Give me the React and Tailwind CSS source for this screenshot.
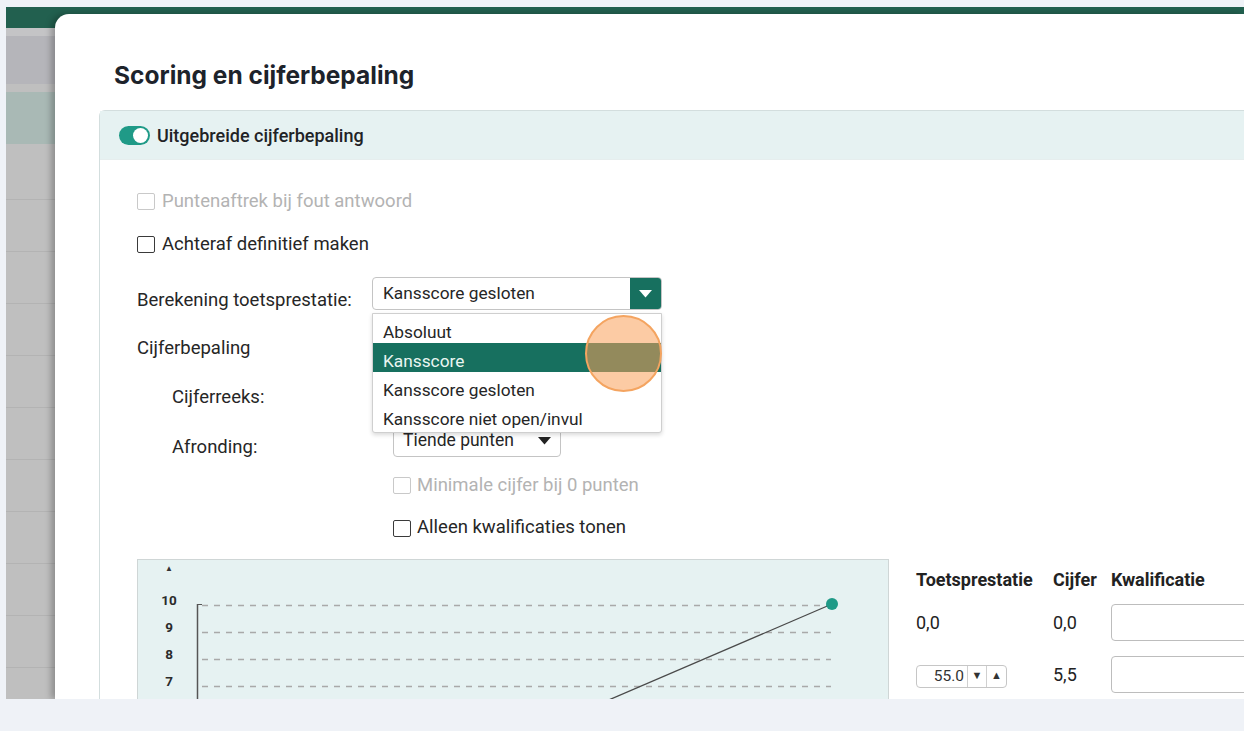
import React from "react";

const bgRows = [
  { h: 8, c: "bg-[#c4c4c6]" },
  { h: 48, c: "bg-[#b5b5ba]" },
  { h: 8, c: "bg-[#bfbfbf]" },
  { h: 52, c: "bg-[#a9b9b5]" },
  { h: 55, c: "bg-[#bfbfbf]" },
  ...Array.from({ length: 10 }, () => ({ h: 52, c: "bg-[#bfbfbf] border-t border-[#b3b3b3]" })),
];

function Checkbox({ disabled }) {
  return (
    <span
      className={`inline-block shrink-0 w-[18px] h-[17px] rounded-[2px] border bg-white ${
        disabled ? "border-[#c9c9c9]" : "border-[#3a3a3a]"
      }`}
    />
  );
}

function Toggle() {
  return (
    <span className="relative inline-flex items-center w-[31px] h-[19px] rounded-full bg-[#1f9a87]">
      <span className="absolute right-[2px] w-[15px] h-[15px] rounded-full bg-white" />
    </span>
  );
}

function Caret({ className = "" }) {
  return (
    <svg width="13" height="8" viewBox="0 0 13 8" className={className}>
      <path d="M0 0 L13 0 L6.5 7.5 Z" fill="currentColor" />
    </svg>
  );
}

function ScoreChart() {
  const gridY = [45, 72, 99, 126];
  return (
    <svg width="752" height="150" className="block">
      <text x="31" y="11" fontSize="8" fontWeight="700" fill="#333" textAnchor="middle">▲</text>
      {["10", "9", "8", "7"].map((t, i) => (
        <text
          key={t}
          x="31"
          y={45 + i * 27}
          fontSize="13.5"
          fontWeight="700"
          fill="#2b2b2b"
          textAnchor="middle"
          fontFamily="Roboto, sans-serif"
        >
          {t}
        </text>
      ))}
      <line x1="59.5" y1="44" x2="59.5" y2="150" stroke="#555" strokeWidth="1.5" />
      <line x1="59" y1="44.5" x2="64" y2="44.5" stroke="#555" strokeWidth="1" />
      {gridY.map((y) => (
        <line key={y} x1="64" y1={y + 0.5} x2="693" y2={y + 0.5} stroke="#a9a9a9" strokeWidth="1.5" strokeDasharray="6 6" />
      ))}
      <line x1="694" y1="44" x2="466" y2="142" stroke="#4a4a4a" strokeWidth="1.3" />
      <circle cx="694" cy="44" r="6" fill="#1f9a87" />
    </svg>
  );
}

function GradeTable() {
  return (
    <div className="pt-[10px] text-[18px] text-[#222]">
      <div className="flex h-[20px] items-center font-bold">
        <span className="w-[137px]">Toetsprestatie</span>
        <span className="w-[58px]">Cijfer</span>
        <span className="whitespace-nowrap">Kwalificatie</span>
      </div>
      <div className="flex items-center h-[37px] mt-[15px]">
        <span className="w-[137px]">0,0</span>
        <span className="w-[58px]">0,0</span>
        <span className="w-[140px] h-[37px] rounded-[4px] border border-[#bdbdbd] bg-white" />
      </div>
      <div className="flex items-center h-[37px] mt-[15px]">
        <span className="w-[137px]">
          <span className="inline-flex h-[23px] items-stretch rounded-[4px] border border-[#c6c6c6] bg-white text-[15.5px] text-[#333]">
            <span className="w-[50px] flex items-center justify-end pr-[3px]">55.0</span>
            <span className="w-[19px] flex items-center justify-center border-l border-[#d0d0d0] text-[11px]">▼</span>
            <span className="w-[20px] flex items-center justify-center border-l border-[#d0d0d0] text-[11px]">▲</span>
          </span>
        </span>
        <span className="w-[58px]">5,5</span>
        <span className="w-[140px] h-[37px] rounded-[4px] border border-[#bdbdbd] bg-white" />
      </div>
    </div>
  );
}

export default function App() {
  const options = ["Absoluut", "Kansscore", "Kansscore gesloten", "Kansscore niet open/invul"];
  return (
    <div
      className="w-[1244px] h-[731px] bg-[#eff2f7] pt-[7px] pl-[6px] pb-[32px] overflow-hidden"
      style={{ fontFamily: "Roboto, 'Liberation Sans', sans-serif" }}
    >
      <div className="relative w-full h-full overflow-hidden">
        {/* app behind the dialog */}
        <div className="h-[21px] bg-[#22604f]" />
        {bgRows.map((r, i) => (
          <div key={i} className={r.c} style={{ height: r.h }} />
        ))}

        {/* dialog */}
        <div className="absolute left-[49px] top-[7px] right-0 bottom-0 bg-white rounded-tl-[14px] shadow-[-4px_0_6px_rgba(0,0,0,0.25)] pl-[44px] overflow-hidden">
          <h1
            className="pl-[15px] pt-[46px] h-[96px] text-[24.5px] leading-[30px] font-bold text-[#1d232b] whitespace-nowrap"
            style={{ fontFamily: "Inter, sans-serif" }}
          >
            Scoring en cijferbepaling
          </h1>

          <div className="border-l border-t border-[#d3dede] rounded-tl-[6px]">
            <div className="h-[49px] bg-[#e6f2f2] flex items-center gap-[7px] pl-[19px] border-b border-[#e6eeee]">
              <Toggle />
              <span className="text-[18px] font-medium text-[#1f2326]">Uitgebreide cijferbepaling</span>
            </div>

            <div className="pl-[37px] pt-[24px] text-[18.5px] text-[#262626] whitespace-nowrap">
              <div className="h-[35px] flex items-center gap-[7px] text-[#b3b3b3]">
                <Checkbox disabled />
                <span>Puntenaftrek bij fout antwoord</span>
              </div>
              <div className="h-[48px] flex items-center gap-[7px] pt-[3px]">
                <Checkbox />
                <span>Achteraf definitief maken</span>
              </div>

              <div className="h-[52px] flex items-start pt-[10px]">
                <span className="w-[235px] pt-[10px] leading-[26px]">Berekening toetsprestatie:</span>
                <div className="relative">
                  <div className="flex w-[290px] h-[33px] rounded-[4px] border border-[#c4c4c4] bg-white overflow-hidden">
                    <span className="flex-1 flex items-center pl-[10px] text-[17.3px]">Kansscore gesloten</span>
                    <span className="w-[31px] bg-[#17705f] flex items-center justify-center text-white">
                      <Caret />
                    </span>
                  </div>
                  <ul className="absolute z-10 left-0 top-[36px] w-[290px] bg-white border border-[#cfcfcf] rounded-b-[3px] shadow-[0_2px_4px_rgba(0,0,0,0.15)] text-[17.3px] pb-[2px]">
                    {options.map((o) => (
                      <li
                        key={o}
                        className={`h-[29px] flex items-center pl-[10px] pt-[9px] ${
                          o === "Kansscore" ? "bg-[#17705f] text-[#eaf6f2]" : "text-[#262626]"
                        }`}
                      >
                        {o}
                      </li>
                    ))}
                  </ul>
                  {/* click highlight */}
                  <span className="absolute z-20 left-[213px] top-[38px] w-[77px] h-[77px] rounded-full border-2 border-[#f4a460] bg-[rgba(250,160,90,0.55)]" />
                </div>
              </div>

              <div className="h-[60px] flex items-center">Cijferbepaling</div>

              <div className="pl-[35px]">
                <div className="h-[38px] flex items-center">
                  <span className="w-[221px]">Cijferreeks:</span>
                  <div className="w-[168px] h-[33px] rounded-[4px] border border-[#c4c4c4]" />
                </div>
                <div className="h-[46px] flex items-start pt-[7px]">
                  <span className="w-[221px] pt-[10px] leading-[26px]">Afronding:</span>
                  <div className="w-[168px] h-[33px] rounded-[4px] border border-[#c4c4c4] flex items-center justify-between pl-[9px] pr-[9px] text-[17.5px]">
                    <span>Tiende punten</span>
                    <Caret className="text-[#222]" />
                  </div>
                </div>
                <div className="h-[42px] flex items-center gap-[6px] pl-[221px] pt-[3px] text-[#b3b3b3]">
                  <Checkbox disabled />
                  <span>Minimale cijfer bij 0 punten</span>
                </div>
                <div className="h-[44px] flex items-center gap-[6px] pl-[221px] pt-[2px]">
                  <Checkbox />
                  <span>Alleen kwalificaties tonen</span>
                </div>
              </div>

              <div className="flex gap-[27px] mt-[10px]">
                <div className="shrink-0 w-[752px] h-[150px] bg-[#e6f2f2] border border-[#cfd6d6]">
                  <ScoreChart />
                </div>
                <GradeTable />
              </div>
            </div>
          </div>
        </div>
      </div>
    </div>
  );
}
